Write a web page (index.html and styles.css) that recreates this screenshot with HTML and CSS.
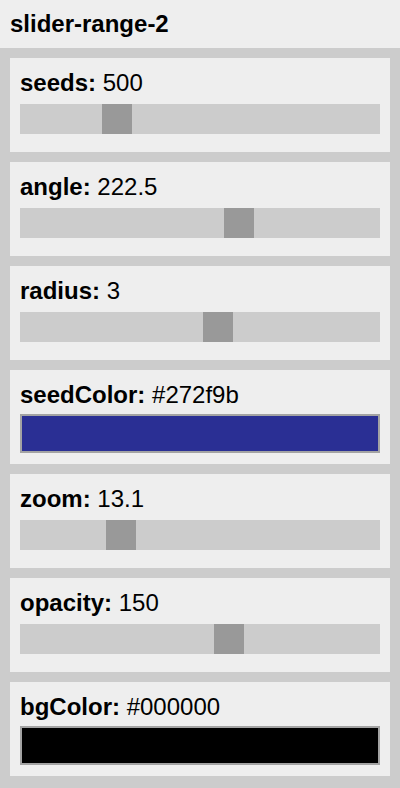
FILE: index.html
```html
<!DOCTYPE html>
<html>
<head>
<meta charset="utf-8">
<link rel="stylesheet" href="styles.css">
</head>
<body>
<header class="title">slider-range-2</header>
<main class="panel">
  <section class="card">
    <div class="label"><b>seeds:</b> 500</div>
    <div class="track"><div class="thumb" style="margin-left:82px"></div></div>
  </section>
  <section class="card">
    <div class="label"><b>angle:</b> 222.5</div>
    <div class="track"><div class="thumb" style="margin-left:204px"></div></div>
  </section>
  <section class="card">
    <div class="label"><b>radius:</b> 3</div>
    <div class="track"><div class="thumb" style="margin-left:183px"></div></div>
  </section>
  <section class="card">
    <div class="label"><b>seedColor:</b> #272f9b</div>
    <div class="swatch" style="background:#2a2f94"></div>
  </section>
  <section class="card">
    <div class="label"><b>zoom:</b> 13.1</div>
    <div class="track"><div class="thumb" style="margin-left:86px"></div></div>
  </section>
  <section class="card">
    <div class="label"><b>opacity:</b> 150</div>
    <div class="track"><div class="thumb" style="margin-left:194px"></div></div>
  </section>
  <section class="card">
    <div class="label"><b>bgColor:</b> #000000</div>
    <div class="swatch" style="background:#000000"></div>
  </section>
</main>
</body>
</html>
```
FILE: styles.css
```css
html, body {
  margin: 0;
  padding: 0;
}
body {
  background: #cccccc;
  font-family: "Liberation Sans", Arial, sans-serif;
  color: #000;
  width: 400px;
  height: 788px;
  overflow: hidden;
}
.title {
  height: 48px;
  box-sizing: border-box;
  background: #eeeeee;
  padding-left: 10px;
  display: flex;
  align-items: center;
  font-weight: bold;
  font-size: 24px;
}
.panel {
  display: flex;
  flex-direction: column;
  gap: 10px;
  padding: 10px;
}
.card {
  background: #eeeeee;
  height: 94px;
  box-sizing: border-box;
  padding: 12px 10px 0 10px;
  display: flex;
  flex-direction: column;
}
.label {
  font-size: 24px;
  line-height: 26px;
  height: 26px;
  white-space: nowrap;
}
.label b {
  font-weight: bold;
}
.track {
  margin-top: 8px;
  height: 30px;
  background: #cccccc;
  display: flex;
}
.thumb {
  width: 30px;
  height: 30px;
  background: #999999;
}
.swatch {
  margin-top: 6px;
  height: 39px;
  box-sizing: border-box;
  border: 2px solid #a3a3a3;
}
```
